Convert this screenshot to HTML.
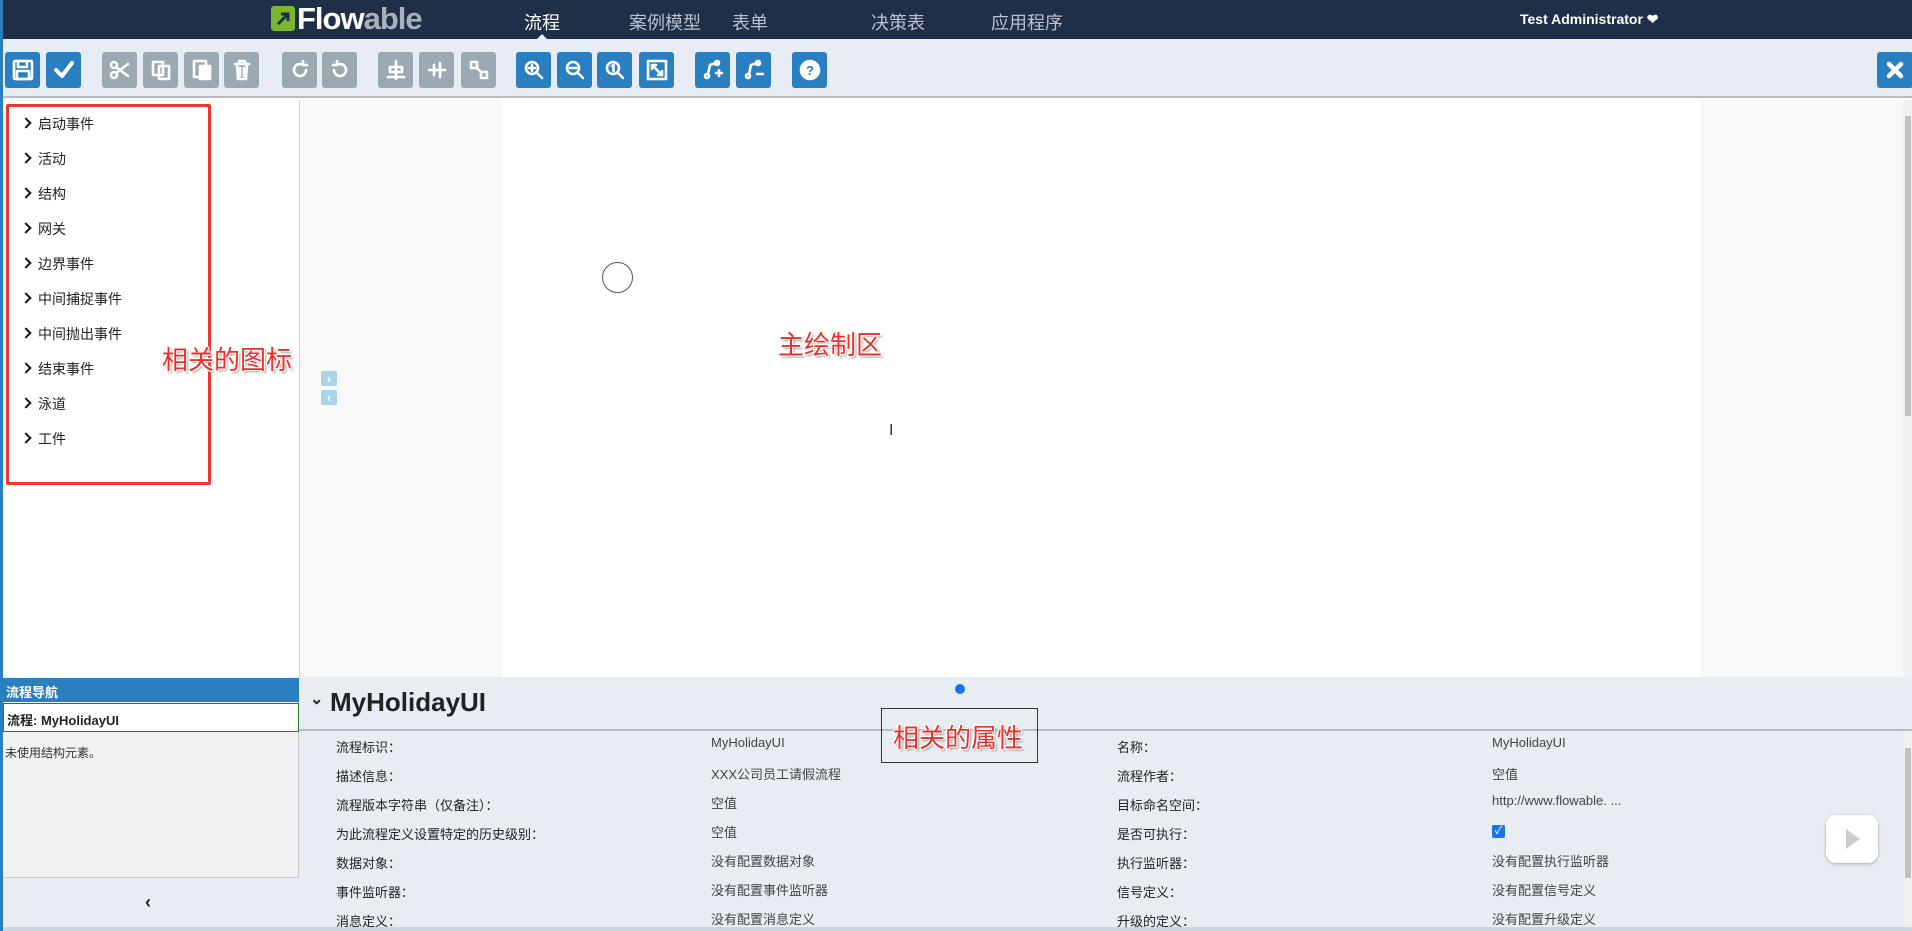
<!DOCTYPE html>
<html><head><meta charset="utf-8"><style>
*{box-sizing:border-box;margin:0;padding:0}
body{width:1912px;height:931px;overflow:hidden;position:relative;background:#fff;font-family:"Liberation Sans","Noto Sans CJK SC",sans-serif;color:#222}
.a{position:absolute}
.nav{left:0;top:0;width:1912px;height:39px;background:#1f2f48}
.navi{top:9px;font-size:18px;color:#b9c0cb}
.tb{left:0;top:39px;width:1912px;height:59px;background:#e8ecf3;border-bottom:2px solid #b8bcc2}
.b{top:52px;width:35px;height:36px;border-radius:3px;background:#2a7fc0;display:flex;align-items:center;justify-content:center}
.g{background:#9aa9b2}
.b svg{width:24px;height:24px;fill:none;stroke:#fff;stroke-width:2.6;stroke-linecap:round;stroke-linejoin:round}
.pi{left:22px;font-size:14px;color:#222}
.pi:before{content:"";display:inline-block;width:6px;height:6px;border-right:2.5px solid #111;border-top:2.5px solid #111;transform:rotate(45deg);margin-right:8px;position:relative;top:-2px}
.ann{color:#e5322a;font-size:26px;text-shadow:1px 1px 0 #fff,-1px -1px 0 #fff,1px -1px 0 #fff,-1px 1px 0 #fff,2px 2px 2px #999;font-family:"Noto Sans CJK SC",sans-serif}
.l{font-size:13px;color:#222}
.v{font-size:13px;color:#444}
</style></head><body>
<div class="a nav"></div>
<div class="a" style="left:0;top:0;width:3px;height:931px;background:#2a7fc0;z-index:5"></div>
<div class="a" style="left:271px;top:6px;width:24px;height:25px;background:#7ab72f;border-radius:3px"></div>
<svg class="a" style="left:275px;top:10px" width="16" height="17"><path d="M3 14L13 4M6 4h7v7" stroke="#1f2f48" stroke-width="3" fill="none"/></svg>
<div class="a" style="left:297px;top:1px;font-size:31px;font-weight:bold;color:#fff;letter-spacing:-1px">Flow<span style="color:#a8b0ba">able</span></div>
<div class="a navi" style="left:524px;color:#fff">流程</div>
<div class="a" style="left:536px;top:34px;width:0;height:0;border:6px solid transparent;border-bottom-color:#e8ecf3;border-top:0"></div>
<div class="a navi" style="left:629px">案例模型</div>
<div class="a navi" style="left:732px">表单</div>
<div class="a navi" style="left:871px">决策表</div>
<div class="a navi" style="left:991px">应用程序</div>
<div class="a" style="left:1520px;top:11px;font-size:14px;color:#fff;font-weight:bold">Test Administrator ❤</div>
<div class="a tb"></div>
<div class="a b" style="left:5px"><svg viewBox="0 0 24 24"><rect x="3" y="3" width="18" height="18" rx="1"/><rect x="7" y="3" width="9" height="6"/><rect x="6" y="13" width="12" height="8"/></svg></div>
<div class="a b" style="left:46px"><svg viewBox="0 0 24 24"><path d="M4 12l6 6L20 5" stroke-width="4"/></svg></div>
<div class="a b g" style="left:102px"><svg viewBox="0 0 24 24"><circle cx="6" cy="7" r="3"/><circle cx="6" cy="17" r="3"/><path d="M8 9l12 9M8 15l12-9"/></svg></div>
<div class="a b g" style="left:143px"><svg viewBox="0 0 24 24"><rect x="4" y="4" width="10" height="13"/><rect x="10" y="8" width="10" height="13"/></svg></div>
<div class="a b g" style="left:184px"><svg viewBox="0 0 24 24"><rect x="4" y="3" width="12" height="16"/><rect x="10" y="8" width="10" height="13" fill="#fff"/></svg></div>
<div class="a b g" style="left:224px"><svg viewBox="0 0 24 24"><path d="M5 6h14M9 6V3h6v3M7 6l1 15h8l1-15M10 10v8M14 10v8"/></svg></div>
<div class="a b g" style="left:282px"><svg viewBox="0 0 24 24"><path d="M18 12a6 6 0 1 1-3-5.2M15 3v4h4"/></svg></div>
<div class="a b g" style="left:322px"><svg viewBox="0 0 24 24"><path d="M6 12a6 6 0 1 0 3-5.2M9 3v4H5"/></svg></div>
<div class="a b g" style="left:378px"><svg viewBox="0 0 24 24"><path d="M12 3v18M6 9h12v5H6zM4 19h16"/></svg></div>
<div class="a b g" style="left:419px"><svg viewBox="0 0 24 24"><path d="M4 12h16M9 7v10M15 5v14"/></svg></div>
<div class="a b g" style="left:461px"><svg viewBox="0 0 24 24"><rect x="4" y="4" width="6" height="6"/><rect x="14" y="14" width="6" height="6"/><path d="M10 10l4 4"/></svg></div>
<div class="a b" style="left:516px"><svg viewBox="0 0 24 24"><circle cx="10" cy="10" r="6"/><path d="M15 15l5 5M7 10h6M10 7v6"/></svg></div>
<div class="a b" style="left:557px"><svg viewBox="0 0 24 24"><circle cx="10" cy="10" r="6"/><path d="M15 15l5 5M7 10h6"/></svg></div>
<div class="a b" style="left:597px"><svg viewBox="0 0 24 24"><circle cx="10" cy="10" r="6"/><path d="M15 15l5 5M9 8l1.5-1v6"/></svg></div>
<div class="a b" style="left:639px"><svg viewBox="0 0 24 24"><rect x="3" y="3" width="18" height="18"/><path d="M7 7l10 10M7 7h4M7 7v4M17 17h-4M17 17v-4"/></svg></div>
<div class="a b" style="left:695px"><svg viewBox="0 0 24 24"><circle cx="6" cy="18" r="2"/><circle cx="16" cy="5" r="2"/><path d="M7 16l2-9 6-2M15 15h6M18 12v6"/></svg></div>
<div class="a b" style="left:736px"><svg viewBox="0 0 24 24"><circle cx="6" cy="18" r="2"/><circle cx="16" cy="5" r="2"/><path d="M7 16l2-9 6-2M15 16h6"/></svg></div>
<div class="a b" style="left:792px"><svg viewBox="0 0 24 24"><circle cx="12" cy="12" r="9" fill="#fff"/><text x="12" y="17" text-anchor="middle" font-size="13" font-weight="bold" fill="#2a7fc0" stroke="none" font-family="Liberation Sans">?</text></svg></div>
<div class="a b" style="left:1877px;width:36px"><svg viewBox="0 0 24 24"><path d="M6 6l12 12M18 6L6 18" stroke-width="4.5"/></svg></div>

<div class="a" style="left:299px;top:100px;width:1604px;height:577px;background:#f8f8f9;border-left:1px solid #d0d0d0"></div>
<div class="a" style="left:502px;top:100px;width:1199px;height:577px;background:#fff"></div>
<div class="a" style="left:1903px;top:100px;width:9px;height:577px;background:#f0f0f0"></div>
<div class="a" style="left:1905px;top:116px;width:6px;height:300px;background:#c1c1c1"></div>
<div class="a" style="left:6px;top:104px;width:205px;height:381px;border:3px solid #e8382f;border-radius:2px"></div>
<div class="a pi" style="top:114px">启动事件</div>
<div class="a pi" style="top:149px">活动</div>
<div class="a pi" style="top:184px">结构</div>
<div class="a pi" style="top:219px">网关</div>
<div class="a pi" style="top:254px">边界事件</div>
<div class="a pi" style="top:289px">中间捕捉事件</div>
<div class="a pi" style="top:324px">中间抛出事件</div>
<div class="a pi" style="top:359px">结束事件</div>
<div class="a pi" style="top:394px">泳道</div>
<div class="a pi" style="top:429px">工件</div>
<div class="a ann" style="left:162px;top:340px">相关的图标</div>
<div class="a" style="left:321px;top:371px;width:16px;height:15px;background:#a9d4e8;border-radius:2px;color:#fff;font-size:13px;line-height:15px;text-align:center;font-weight:bold">›</div>
<div class="a" style="left:321px;top:390px;width:16px;height:15px;background:#a9d4e8;border-radius:2px;color:#fff;font-size:13px;line-height:15px;text-align:center;font-weight:bold">‹</div>
<div class="a" style="left:602px;top:262px;width:31px;height:31px;border:1.5px solid #555;border-radius:50%"></div>
<div class="a ann" style="left:778px;top:325px">主绘制区</div>
<div class="a" style="left:889px;top:422px;font-size:16px;color:#333">I</div>

<div class="a" style="left:3px;top:677px;width:1909px;height:254px;background:#e8ecf3"></div>
<div class="a" style="left:3px;top:677px;width:296px;height:250px;background:#f1f1f2;border-right:1px solid #c8c8c8"></div>
<div class="a" style="left:3px;top:678px;width:296px;height:24px;background:#2a7fc0;color:#fff;font-size:13px;font-weight:bold;padding:4px 3px">流程导航</div>
<div class="a" style="left:3px;top:703px;width:296px;height:29px;background:#fff;border:1px solid #2b7a2b;font-size:13px;font-weight:bold;padding:6px 3px">流程: MyHolidayUI</div>
<div class="a" style="left:5px;top:744px;font-size:12px;color:#333">未使用结构元素。</div>
<div class="a" style="left:3px;top:877px;width:296px;height:50px;background:#e8ecf3;border-top:1px solid #c8c8c8"></div>
<div class="a" style="left:145px;top:892px;font-size:18px;font-weight:bold">‹</div>
<div class="a" style="left:310px;top:689px;font-size:16px;font-weight:bold">⌄</div>
<div class="a" style="left:330px;top:687px;font-size:26px;font-weight:bold;color:#222">MyHolidayUI</div>
<div class="a" style="left:299px;top:729px;width:1613px;height:2px;background:#b8bcc4"></div>
<div class="a" style="left:1903px;top:731px;width:9px;height:196px;background:#f0f0f0"></div>
<div class="a" style="left:1905px;top:748px;width:6px;height:130px;background:#c1c1c1"></div>
<div class="a" style="left:0;top:927px;width:1912px;height:4px;background:#cdd6e0"></div>

<div class="a l" style="left:336px;top:737px">流程标识：</div><div class="a v" style="left:711px;top:735px">MyHolidayUI</div>
<div class="a l" style="left:336px;top:766px">描述信息：</div><div class="a v" style="left:711px;top:764px">XXX公司员工请假流程</div>
<div class="a l" style="left:336px;top:795px">流程版本字符串（仅备注）：</div><div class="a v" style="left:711px;top:793px">空值</div>
<div class="a l" style="left:336px;top:824px">为此流程定义设置特定的历史级别：</div><div class="a v" style="left:711px;top:822px">空值</div>
<div class="a l" style="left:336px;top:853px">数据对象：</div><div class="a v" style="left:711px;top:851px">没有配置数据对象</div>
<div class="a l" style="left:336px;top:882px">事件监听器：</div><div class="a v" style="left:711px;top:880px">没有配置事件监听器</div>
<div class="a l" style="left:336px;top:911px">消息定义：</div><div class="a v" style="left:711px;top:909px">没有配置消息定义</div>

<div class="a l" style="left:1117px;top:737px">名称：</div><div class="a v" style="left:1492px;top:735px">MyHolidayUI</div>
<div class="a l" style="left:1117px;top:766px">流程作者：</div><div class="a v" style="left:1492px;top:764px">空值</div>
<div class="a l" style="left:1117px;top:795px">目标命名空间：</div><div class="a v" style="left:1492px;top:793px">http://www.flowable. ...</div>
<div class="a l" style="left:1117px;top:824px">是否可执行：</div><div class="a" style="left:1492px;top:825px;width:13px;height:13px;background:#1a73e8;border-radius:2px;color:#fff;font-size:11px;line-height:13px;text-align:center">✓</div>
<div class="a l" style="left:1117px;top:853px">执行监听器：</div><div class="a v" style="left:1492px;top:851px">没有配置执行监听器</div>
<div class="a l" style="left:1117px;top:882px">信号定义：</div><div class="a v" style="left:1492px;top:880px">没有配置信号定义</div>
<div class="a l" style="left:1117px;top:911px">升级的定义：</div><div class="a v" style="left:1492px;top:909px">没有配置升级定义</div>

<div class="a" style="left:881px;top:708px;width:157px;height:55px;border:1px solid #333"></div>
<div class="a ann" style="left:893px;top:718px">相关的属性</div>
<div class="a" style="left:955px;top:684px;width:10px;height:10px;border-radius:50%;background:#1a73e8"></div>
<div class="a" style="left:1826px;top:815px;width:52px;height:48px;background:#fff;border-radius:10px;box-shadow:0 1px 3px #aaa"></div>
<div class="a" style="left:1846px;top:829px;width:0;height:0;border-left:14px solid #ccc;border-top:10px solid transparent;border-bottom:10px solid transparent"></div>
</body></html>
